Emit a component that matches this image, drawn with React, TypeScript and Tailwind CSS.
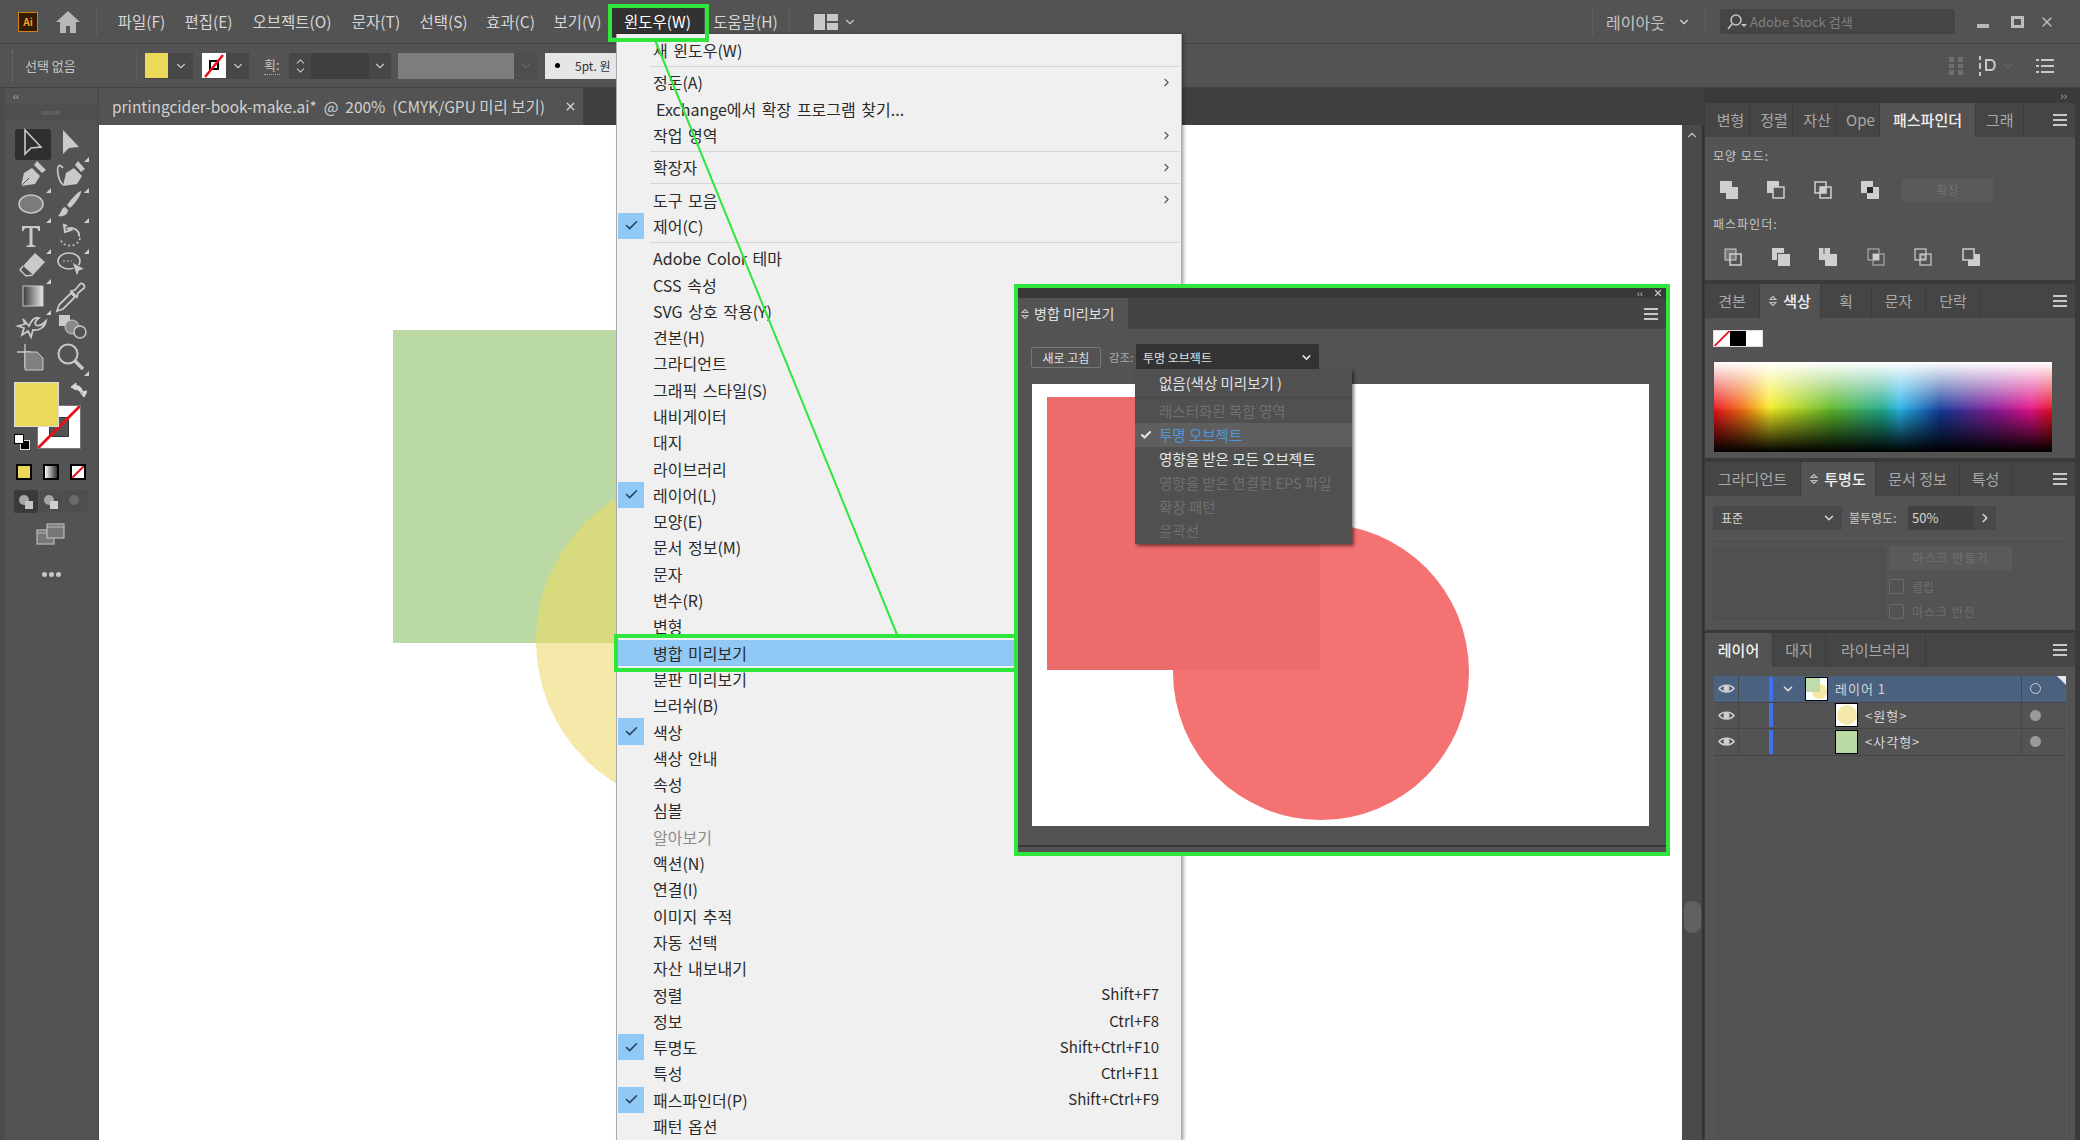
import { Check, ChevronDown, ChevronRight, ChevronUp, X } from "lucide-react";

const menuBar = [
  { label: "파일(F)", w: "w-[67px]" },
  { label: "편집(E)", w: "w-[67px]" },
  { label: "오브젝트(O)", w: "w-[100px]" },
  { label: "문자(T)", w: "w-[68px]" },
  { label: "선택(S)", w: "w-[67px]" },
  { label: "효과(C)", w: "w-[67px]" },
  { label: "보기(V)", w: "w-[67px]" },
  { label: "윈도우(W)", w: "w-[93px]", active: true },
  { label: "도움말(H)", w: "w-[83px]" },
];

type Item = { label: string; arrow?: boolean; check?: boolean; keys?: string; dim?: boolean; hi?: boolean; indent?: boolean; sep?: boolean };

const windowMenu: Item[] = [
  { label: "새 윈도우(W)", sep: true },
  { label: "정돈(A)", arrow: true },
  { label: "Exchange에서 확장 프로그램 찾기...", indent: true },
  { label: "작업 영역", arrow: true, sep: true },
  { label: "확장자", arrow: true, sep: true },
  { label: "도구 모음", arrow: true },
  { label: "제어(C)", check: true, sep: true },
  { label: "Adobe Color 테마" },
  { label: "CSS 속성" },
  { label: "SVG 상호 작용(Y)" },
  { label: "견본(H)" },
  { label: "그라디언트" },
  { label: "그래픽 스타일(S)" },
  { label: "내비게이터" },
  { label: "대지" },
  { label: "라이브러리" },
  { label: "레이어(L)", check: true },
  { label: "모양(E)" },
  { label: "문서 정보(M)" },
  { label: "문자" },
  { label: "변수(R)" },
  { label: "변형" },
  { label: "병합 미리보기", hi: true },
  { label: "분판 미리보기" },
  { label: "브러쉬(B)" },
  { label: "색상", check: true },
  { label: "색상 안내" },
  { label: "속성" },
  { label: "심볼" },
  { label: "알아보기", dim: true },
  { label: "액션(N)" },
  { label: "연결(I)" },
  { label: "이미지 추적" },
  { label: "자동 선택" },
  { label: "자산 내보내기" },
  { label: "정렬", keys: "Shift+F7" },
  { label: "정보", keys: "Ctrl+F8" },
  { label: "투명도", check: true, keys: "Shift+Ctrl+F10" },
  { label: "특성", keys: "Ctrl+F11" },
  { label: "패스파인더(P)", check: true, keys: "Shift+Ctrl+F9" },
  { label: "패턴 옵션" },
];

function Burger() {
  return (
    <div className="ml-auto mr-[8px] flex w-[14px] flex-col gap-[3px]">
      <span className="h-[2px] bg-[#c8c8c8]" />
      <span className="h-[2px] bg-[#c8c8c8]" />
      <span className="h-[2px] bg-[#c8c8c8]" />
    </div>
  );
}

function UpDown() {
  return (
    <svg width="8" height="12" viewBox="0 0 8 12" className="mr-[6px] shrink-0" fill="none" stroke="#bdbdbd" strokeWidth="1.2">
      <path d="M1 4.5 4 1.5l3 3zM1 7.5l3 3 3-3z" />
    </svg>
  );
}

function Tab({ label, w, active, updown, clip }: { label: string; w: string; active?: boolean; updown?: boolean; clip?: boolean }) {
  return (
    <div
      className={`flex h-full items-center justify-center overflow-hidden whitespace-nowrap border-r border-[#3d3d3d] text-[15px] ${w} ${
        active ? "bg-[#535353] font-medium text-[#f0f0f0]" : "text-[#a8a8a8]"
      } ${clip ? "justify-start pl-[10px]" : ""}`}
    >
      {updown && <UpDown />}
      {label}
    </div>
  );
}

function TabBar({ children }: { children: React.ReactNode }) {
  return <div className="flex h-[34px] items-center bg-[#454545]">{children}<Burger /></div>;
}

function Box({ n, fill = "#cfcfcf" }: { n: number; fill?: string }) {
  // pathfinder glyphs, all two overlapping squares with a different part filled
  const c = "#cfcfcf";
  const s = "#535353";
  const shapes = [
    <><rect x="0" y="0" width="12" height="12" fill={c} /><rect x="6" y="6" width="12" height="12" fill={c} /></>,
    <><rect x="0" y="0" width="12" height="12" fill={c} /><rect x="6" y="6" width="11" height="11" fill={s} stroke={c} strokeWidth="1.5" /></>,
    <><rect x="1" y="1" width="11" height="11" fill="none" stroke={c} strokeWidth="1.5" /><rect x="6" y="6" width="11" height="11" fill="none" stroke={c} strokeWidth="1.5" /><rect x="6" y="6" width="6" height="6" fill={c} /></>,
    <><rect x="0" y="0" width="12" height="12" fill={c} /><rect x="6" y="6" width="12" height="12" fill={c} /><rect x="6" y="6" width="6" height="6" fill="#2a2a2a" /></>,
    <><rect x="1" y="1" width="11" height="11" fill={fill} stroke={c} strokeWidth="1" /><rect x="6" y="6" width="11" height="11" fill="none" stroke={c} strokeWidth="1.5" /></>,
    <><rect x="0" y="0" width="12" height="12" fill={c} /><rect x="5" y="5" width="13" height="13" fill={s} /><rect x="6" y="6" width="12" height="12" fill={c} /></>,
    <><rect x="0" y="0" width="11" height="12" fill={c} /><rect x="6" y="6" width="12" height="12" fill={c} /><path d="M5 0v6" stroke={s} /></>,
    <><rect x="1" y="1" width="11" height="11" fill="none" stroke="#aaa" strokeWidth="1.2" /><rect x="6" y="6" width="11" height="11" fill="none" stroke="#aaa" strokeWidth="1.2" /><rect x="6" y="6" width="6" height="6" fill={c} /></>,
    <><rect x="1" y="1" width="11" height="11" fill="none" stroke={c} strokeWidth="1.2" /><rect x="6" y="6" width="11" height="11" fill="none" stroke={c} strokeWidth="1.2" /><rect x="7" y="7" width="4" height="4" fill="none" stroke={c} /></>,
    <><rect x="6" y="6" width="12" height="12" fill={c} /><rect x="1" y="1" width="11" height="11" fill="#535353" stroke={c} strokeWidth="1.5" /></>,
  ];
  return <svg width="18" height="18" viewBox="0 0 18 18" className="shrink-0">{shapes[n]}</svg>;
}

function Triangle() {
  return <path d="M36 36h-5l5-5z" fill="#cfcfcf" />;
}

// tool glyphs, drawn on a 36 box
function ToolIcon({ n }: { n: number }) {
  const c = "#c9c9c9";
  const art = [
    <path key="a" d="M10 4v24l6-6 10-1z" fill="none" stroke={c} strokeWidth="1.6" />,
    <><path d="M10 4v24l6-6 10-1z" fill={c} /><Triangle /></>,
    <><path d="M6 29l3-13 8-5 8 8-5 8zM19 8l3-4 9 9-4 3z" fill={c} /><path d="M6 29l8-8" stroke="#535353" /><Triangle /></>,
    <><path d="M10 29l3-13 8-5 8 8-5 8zM22 8l3-4 7 8-4 3z" fill={c} /><path d="M10 11c-5-6-6 0-5 6s3 9 5 11" fill="none" stroke={c} strokeWidth="1.6" /><Triangle /></>,
    <><ellipse cx="16" cy="17" rx="12" ry="9" fill="#7b7b7b" stroke={c} strokeWidth="1.5" /><Triangle /></>,
    <><path d="M28 4c1 2-5 12-11 17l-3-3C19 11 26 4 28 4zM12 20l3 3c0 5-5 7-10 6 3-2 3-8 7-9z" fill={c} /><Triangle /></>,
    <><path d="M7 8h18v5h-1.500c-.5-2-1.500-3-3-3h-3v16c0 1 1 1.500 3 1.500V29h-9v-1.500c2 0 3-.5 3-1.500V10h-3c-1.500 0-2.500 1-3 3H7z" fill={c} /><Triangle /></>,
    <><path d="M14 8l-3-1 1 7 6-2-3-1.500c5-2 12 2 11 8" fill="none" stroke={c} strokeWidth="2" /><path d="M27 20c-1 6-8 9-14 7-3-1-5-3-6-7" fill="none" stroke={c} strokeWidth="1.600" strokeDasharray="2 2.500" /><Triangle /></>,
    <><path d="M20 5l10 9-12 13-10-9z" fill={c} /><path d="M8 18l-3 4 6 6 7-1" fill="#535353" stroke={c} strokeWidth="1.500" /><Triangle /></>,
    <><ellipse cx="16" cy="13" rx="11" ry="8" fill="none" stroke={c} strokeWidth="1.600" /><path d="M10 13h9" stroke={c} strokeDasharray="2 2" /><path d="M19 14l13 7-6 2-2 6z" fill={c} stroke="#535353" /></>,
    <><defs><linearGradient id="tg" x1="0" x2="1"><stop offset="0" stopColor="#3a3a3a" /><stop offset="1" stopColor="#e8e8e8" /></linearGradient></defs><rect x="8" y="7" width="20" height="20" fill="url(#tg)" stroke={c} /><Triangle /></>,
    <path d="M4 32l2-6L18 14l4 4L10 30zM18 12l4-1 5-6c2-2 6 2 4 4l-6 5-1 4z" fill="#535353" stroke={c} strokeWidth="1.800" />,
    <path d="M8 10l6 7c3-7 7-9 10-8-3 2-5 5-3 7 3 2 8-2 10-4-1 6-7 10-13 9l-2 7-3-6-6 4 2-7-6-2 7-2z" fill="none" stroke={c} strokeWidth="1.800" />,
    <><rect x="6" y="6" width="11" height="11" fill={c} /><circle cx="19" cy="18" r="7" fill="#8a8a8a" stroke={c} /><circle cx="27" cy="23" r="6" fill="#535353" stroke={c} strokeWidth="1.500" /></>,
    <><path d="M10 4v24M2 12h14" stroke={c} strokeWidth="1.300" /><path d="M10 12h12l6 6v12H10z" fill="#808080" stroke={c} strokeWidth="1" /></>,
    <><circle cx="15" cy="14" r="9.500" fill="none" stroke={c} strokeWidth="2" /><path d="M22 21l8 8" stroke={c} strokeWidth="3.500" /><Triangle /></>,
  ];
  return <svg width="36" height="36" viewBox="0 0 36 36" className="shrink-0">{art[n]}</svg>;
}

function Toolbar() {
  return (
    <div className="flex h-full w-[99px] shrink-0 flex-col bg-[#535353] border-l-[5px] border-[#4c4c4c] border-r-[2px]">
      <div className="flex h-[15px] items-center pl-[8px] text-[10px] leading-none text-[#bdbdbd]">‹‹</div>
      <div className="flex h-[18px] items-center justify-center bg-[#4f4f4f] text-[8px] tracking-[0] text-[#777]">ıııııııı</div>
      <div className="mt-[8px] grid grid-cols-2 gap-x-[4px] px-[10px]">
        {Array.from({ length: 16 }, (_, i) => (
          <div key={i} className={`flex h-[30.500px] w-[36px] items-center justify-center rounded-[3px] ${i === 0 ? "bg-[#2f2f2f]" : ""}`}>
            <ToolIcon n={i} />
          </div>
        ))}
      </div>
      <div className="relative mx-[9px] mt-[9px] h-[68px]">
        <div className="absolute left-[23px] top-[23px] h-[44px] w-[44px] overflow-hidden border border-[#777] bg-white">
          <div className="absolute left-[11px] top-[11px] h-[20px] w-[20px] bg-[#535353] border border-[#333]" />
          <svg className="absolute inset-0" viewBox="0 0 44 44"><path d="M0 44 44 0" stroke="#e8101c" strokeWidth="3" /></svg>
        </div>
        <div className="absolute left-0 top-0 h-[45px] w-[45px] border border-[#ddd] bg-[#ecd959]" />
        <svg className="absolute left-[56px] top-0" width="17" height="16" viewBox="0 0 17 16"><path d="M3 5c6-3 9 0 10 7M1 5l5-4v7zM10 10l4 5 3-6z" fill="#d8d8d8" stroke="#d8d8d8" /></svg>
      </div>
      <div className="relative -mt-[16px] ml-[9px] h-[16px] w-[16px]">
        <div className="absolute bottom-0 right-0 h-[10px] w-[10px] border border-[#ddd] bg-black" />
        <div className="absolute left-0 top-0 h-[10px] w-[10px] border border-black bg-white" />
      </div>
      <div className="mt-[10px] flex h-[24px] items-center justify-between px-[11px]">
        <div className="h-[16px] w-[16px] border-2 border-black bg-[#ecd959]" />
        <div className="h-[16px] w-[16px] border-2 border-black bg-gradient-to-r from-white to-[#333]" />
        <div className="relative h-[16px] w-[16px] overflow-hidden border-2 border-black bg-white">
          <svg className="absolute inset-0" viewBox="0 0 12 12"><path d="M0 12 12 0" stroke="#e8101c" strokeWidth="2" /></svg>
        </div>
      </div>
      <div className="mx-[9px] mt-[6px] flex h-[23px] items-stretch gap-[1px] text-[#bdbdbd]">
        {[0, 1, 2].map((i) => (
          <div key={i} className={`flex flex-1 items-center justify-center rounded-[2px] ${i === 0 ? "bg-[#3a3a3a]" : "bg-[#4e4e4e]"}`}>
            <svg width="16" height="16" viewBox="0 0 16 16">
              <circle cx="6" cy="6" r="5" fill={i === 2 ? "#6a6a6a" : "#a6a6a6"} />
              {i < 2 && <rect x="7" y="7" width="8" height="8" fill={i === 0 ? "#c4c4c4" : "#d0d0d0"} />}
            </svg>
          </div>
        ))}
      </div>
      <div className="mt-[10px] flex justify-center">
        <svg width="30" height="22" viewBox="0 0 30 22" fill="#777" stroke="#bbb" strokeWidth="1.200">
          <rect x="1" y="7" width="17" height="14" /><rect x="11" y="1" width="17" height="14" /><path d="M11 4h17M1 10h10" />
        </svg>
      </div>
      <div className="mt-[27px] flex justify-center gap-[2px]">
        <span className="h-[5px] w-[5px] rounded-full bg-[#c8c8c8]" />
        <span className="h-[5px] w-[5px] rounded-full bg-[#c8c8c8]" />
        <span className="h-[5px] w-[5px] rounded-full bg-[#c8c8c8]" />
      </div>
    </div>
  );
}

function TitleBar() {
  return (
    <div className="flex h-[43px] items-center bg-[#535353] pl-[18px] text-[15.500px] text-[#d6d6d6]">
      <div className="flex h-[20px] w-[20px] items-center justify-center border border-[#d87d12] bg-[#321c02] text-[10px] font-bold leading-none text-[#f59b24]">Ai</div>
      <svg width="26" height="24" viewBox="0 0 26 24" className="ml-[17px]" fill="#b8b8b8"><path d="M13 1 1 12h4v11h6v-7h4v7h6V12h4z" /></svg>
      <div className="ml-[15px] mr-[11px] h-[26px] w-px bg-[#5f5f5f]" />
      {menuBar.map((m) => (
        <div key={m.label} className={`flex h-[30px] items-center justify-center whitespace-nowrap ${m.w} ${m.active ? "bg-[#323232] text-white" : ""}`}>
          {m.label}
        </div>
      ))}
      <div className="mx-[2px] h-[26px] w-px bg-[#5f5f5f]" />
      <svg width="24" height="18" viewBox="0 0 24 18" className="ml-[22px]" fill="#c8c8c8"><path d="M0 1h11v16H0zM13 1h11v7H13zM13 10h11v7H13z" /></svg>
      <ChevronDown className="ml-[5px] h-[14px] w-[14px] text-[#c8c8c8]" />
      <div className="ml-auto h-[26px] w-px bg-[#5f5f5f]" />
      <span className="ml-[13px] text-[16px] text-[#c4c4c4]">레이아웃</span>
      <ChevronDown className="ml-[12px] h-[14px] w-[14px]" />
      <div className="mx-[14px] h-[26px] w-px bg-[#5f5f5f]" />
      <div className="flex h-[25px] w-[235px] items-center rounded-[3px] bg-[#454545] pl-[6px] text-[13px] text-[#808080]">
        <svg width="22" height="18" viewBox="0 0 22 18" fill="none" stroke="#c8c8c8" strokeWidth="1.500"><circle cx="10" cy="7" r="5" /><path d="M6 11l-4 5" /><path d="M15 11h6l-3 3z" fill="#c8c8c8" stroke="none" /></svg>
        <span className="ml-[2px]">Adobe Stock 검색</span>
      </div>
      <div className="ml-[22px] flex w-[103px] items-center text-[#bdbdbd]">
        <div className="mt-[8px] h-[4px] w-[12px] bg-[#b8b8b8]" />
        <div className="ml-[22px] h-[12px] w-[13px] border-[3px] border-[#bdbdbd]" />
        <X className="ml-[15px] h-[16px] w-[16px]" />
      </div>
    </div>
  );
}

function ControlBar() {
  return (
    <div className="flex h-[45px] items-center border-y border-[#424242] bg-[#535353] text-[#c4c4c4]">
      <div className="ml-[12px] h-[30px] w-[2px] border-l border-dotted border-[#777]" />
      <span className="ml-[11px] w-[56px] text-[13px]">선택 없음</span>
      <div className="ml-[55px] h-[30px] w-px bg-[#5e5e5e]" />
      <div className="ml-[8px] flex h-[26px] w-[48px] items-center bg-[#474747]">
        <div className="h-[25px] w-[23px] bg-[#ecd959]" />
        <ChevronDown className="mx-auto h-[14px] w-[14px]" />
      </div>
      <div className="ml-[9px] flex h-[26px] w-[47px] items-center bg-[#474747]">
        <div className="relative h-[25px] w-[24px] overflow-hidden bg-white">
          <div className="absolute left-[7px] top-[7px] h-[10px] w-[10px] border-2 border-black" />
          <svg className="absolute inset-0" viewBox="0 0 24 25"><path d="M3 24 21 2" stroke="#e8101c" strokeWidth="2.500" /></svg>
        </div>
        <ChevronDown className="mx-auto h-[14px] w-[14px]" />
      </div>
      <span className="ml-[15px] w-[16px] border-b border-dotted border-[#aaa] text-[13px] leading-[18px]">획:</span>
      <div className="ml-[9px] flex h-[26px] w-[102px] items-center bg-[#474747]">
        <div className="flex w-[22px] flex-col items-center">
          <ChevronUp className="-mb-[2px] h-[13px] w-[13px]" />
          <ChevronDown className="-mt-[2px] h-[13px] w-[13px]" />
        </div>
        <div className="h-full w-[58px] bg-[#3f3f3f]" />
        <ChevronDown className="mx-auto h-[14px] w-[14px]" />
      </div>
      <div className="ml-[7px] h-[26px] w-[116px] bg-[#7d7d7d]" />
      <div className="flex h-[26px] w-[23px] items-center justify-center bg-[#4e4e4e]"><ChevronDown className="h-[14px] w-[14px] text-[#666]" /></div>
      <div className="ml-[8px] flex h-[26px] w-[72px] items-center overflow-hidden whitespace-nowrap bg-[#e6e6e6] pl-[10px] text-[12px] text-[#333]">
        <span className="h-[5px] w-[5px] rounded-full bg-black" />
        <span className="ml-[15px]">5pt. 원</span>
      </div>
      <div className="ml-auto flex items-center pr-[26px] text-[#9c9c9c]">
        <svg width="16" height="20" viewBox="0 0 16 20" fill="#6f6f6f"><path d="M1 1h5v5H1zM10 1h5v5h-5zM1 8h5v4H1zM10 8h5v4h-5zM1 14h5v5H1zM10 14h5v5h-5z" /></svg>
        <svg width="22" height="22" viewBox="0 0 22 22" className="ml-[14px]" fill="none" stroke="#c8c8c8" strokeWidth="2"><path d="M2 1v4M2 8v6M2 17v4M8 5h5c5 0 5 10 0 10H8z" /></svg>
        <ChevronDown className="ml-[2px] h-[12px] w-[12px] text-[#777]" />
        <svg width="18" height="18" viewBox="0 0 18 18" className="ml-[22px]" stroke="#c8c8c8" strokeWidth="2"><path d="M0 3h3M5 3h13M0 9h3M5 9h13M0 15h3M5 15h13" /></svg>
      </div>
    </div>
  );
}

function LayerRow({ name, thumb, top, selected }: { name: string; thumb: React.ReactNode; top?: boolean; selected?: boolean }) {
  return (
    <div className={`flex h-[26.500px] items-center border-b border-[#454545] ${selected ? "bg-[#4a627f]" : ""}`}>
      <div className="flex h-full w-[25px] items-center justify-center border-r border-[#484848]">
        <svg width="17" height="11" viewBox="0 0 17 11" fill="none" stroke="#d0d0d0" strokeWidth="1.500"><path d="M1 5.500C4 1 13 1 16 5.500 13 10 4 10 1 5.500z" /><circle cx="8.500" cy="5.500" r="2.200" fill="#d0d0d0" /></svg>
      </div>
      <div className="ml-[30px] h-[24px] w-[4px] bg-[#4271f0]" />
      {top ? <ChevronDown className="ml-[8px] mr-[2px] h-[14px] w-[14px] text-[#dcdcdc]" strokeWidth={3} /> : <div className="w-[54px]" />}
      <div className="ml-[8px]">{thumb}</div>
      <span className="ml-[7px] whitespace-nowrap text-[13px] tracking-[1px] text-[#d6d6d6]">{name}</span>
      <div className="ml-auto flex h-full w-[45px] items-center border-l border-[#484848] pl-[8px]">
        <span className={`h-[11px] w-[11px] rounded-full ${top ? "border border-[#d0d0d0]" : "bg-[#999]"}`} />
      </div>
    </div>
  );
}

function Dock() {
  return (
    <div className="flex h-full w-[376px] shrink-0 flex-col bg-[#3a3a3a] pl-px pr-[5px]">
      <div className="flex h-[15px] items-center justify-end pr-[8px] text-[11px] leading-none text-[#bbb]">››</div>

      <div className="h-[177px] bg-[#535353]">
        <TabBar>
          <Tab label="변형" w="w-[45px] pl-[7px]" />
          <Tab label="정렬" w="w-[43px] pl-[6px]" />
          <Tab label="자산" w="w-[43px] pl-[6px]" />
          <Tab label="Ope" w="w-[44px]" clip />
          <Tab label="패스파인더" w="w-[96px]" active />
          <Tab label="그래" w="w-[48px]" clip />
        </TabBar>
        <div className="pl-[8px] pt-[11px] text-[12px] leading-[16px] tracking-[1px] text-[#c8c8c8]">모양 모드:</div>
        <div className="mt-[14px] flex h-[24px] items-center gap-[29px] pl-[15px]">
          <Box n={0} /><Box n={1} /><Box n={2} /><Box n={3} />
          <div className="flex h-[23px] w-[91px] -translate-x-[6px] items-center justify-center bg-[#5a5a5a] text-[12px] text-[#717171]">확장</div>
        </div>
        <div className="mt-[14px] pl-[8px] text-[12px] leading-[16px] tracking-[1px] text-[#c8c8c8]">패스파인더:</div>
        <div className="mt-[16px] flex items-center gap-[29.500px] pl-[19px]">
          <Box n={4} fill="#777" /><Box n={5} /><Box n={6} /><Box n={7} /><Box n={8} /><Box n={9} />
        </div>
      </div>

      <div className="mt-[4px] h-[174px] bg-[#535353]">
        <TabBar>
          <Tab label="견본" w="w-[55px]" />
          <Tab label="색상" w="w-[61px]" active updown />
          <Tab label="획" w="w-[51px]" />
          <Tab label="문자" w="w-[54px]" />
          <Tab label="단락" w="w-[55px]" />
        </TabBar>
        <div className="ml-[8px] mt-[12px] flex h-[17px] w-[50px] border border-[#ddd]">
          <div className="relative flex-1 overflow-hidden bg-white">
            <svg className="absolute inset-0 h-full w-full" viewBox="0 0 16 16"><path d="M0 16 16 0" stroke="#e8101c" strokeWidth="2" /></svg>
          </div>
          <div className="flex-1 bg-black" />
          <div className="flex-1 bg-white" />
        </div>
        <svg width="338" height="90" className="ml-[9px] mt-[15px] block" viewBox="0 0 338 90">
          <defs>
            <linearGradient id="hue" x1="0" x2="1">
              <stop offset="0" stopColor="#e8111c" />
              <stop offset="0.08" stopColor="#f26a12" />
              <stop offset="0.165" stopColor="#f6ec22" />
              <stop offset="0.35" stopColor="#5cb82a" />
              <stop offset="0.5" stopColor="#1eaa90" />
              <stop offset="0.55" stopColor="#25b6e8" />
              <stop offset="0.67" stopColor="#123c9c" />
              <stop offset="0.83" stopColor="#8c1c98" />
              <stop offset="0.94" stopColor="#e6108a" />
              <stop offset="1" stopColor="#e8101c" />
            </linearGradient>
            <linearGradient id="wht" x1="0" x2="0" y1="0" y2="1">
              <stop offset="0" stopColor="#fff" />
              <stop offset="0.55" stopColor="#fff" stopOpacity="0" />
            </linearGradient>
            <linearGradient id="blk" x1="0" x2="0" y1="0" y2="1">
              <stop offset="0.5" stopColor="#000" stopOpacity="0" />
              <stop offset="1" stopColor="#000" />
            </linearGradient>
          </defs>
          <rect width="338" height="90" fill="url(#hue)" />
          <rect width="338" height="90" fill="url(#wht)" />
          <rect width="338" height="90" fill="url(#blk)" />
        </svg>
      </div>

      <div className="mt-[4px] h-[168px] bg-[#535353]">
        <TabBar>
          <Tab label="그라디언트" w="w-[96px]" />
          <Tab label="투명도" w="w-[75px]" active updown />
          <Tab label="문서 정보" w="w-[84px]" />
          <Tab label="특성" w="w-[52px]" />
        </TabBar>
        <div className="ml-[8px] mt-[10px] flex h-[24px] items-center">
          <div className="flex h-full w-[129px] items-center justify-between rounded-[2px] bg-[#494949] pl-[8px] pr-[6px] text-[12px] text-[#d8d8d8]">
            표준<ChevronDown className="h-[14px] w-[14px]" strokeWidth={2.500} />
          </div>
          <span className="ml-[7px] w-[59px] text-[12px] text-[#c8c8c8]">불투명도:</span>
          <div className="flex h-full w-[66px] items-center bg-[#424242] pl-[4px] text-[13px] text-[#d8d8d8]">50%</div>
          <div className="flex h-full w-[22px] items-center justify-center bg-[#494949]"><ChevronRight className="h-[14px] w-[14px] text-[#ddd]" strokeWidth={2.500} /></div>
        </div>
        <div className="mx-[8px] mt-[8px] h-px bg-[#5c5c5c]" />
        <div className="ml-[8px] mt-[9px] flex">
          <div className="h-[71px] w-[172px] rounded-[2px] border border-[#4b4b4b] bg-[#505050]" />
          <div className="ml-[4px]">
            <div className="-mt-[2px] flex h-[24px] w-[123px] items-center justify-center bg-[#5a5a5a] text-[12px] tracking-[1px] text-[#717171]">마스크 만들기</div>
            <div className="mt-[9px] flex h-[15px] items-center text-[12px] text-[#6f6f6f]"><span className="mr-[8px] h-[15px] w-[15px] rounded-[2px] border border-[#6a6a6a]" />클립</div>
            <div className="mt-[10px] flex h-[15px] items-center text-[12px] tracking-[1px] text-[#6f6f6f]"><span className="mr-[8px] h-[15px] w-[15px] rounded-[2px] border border-[#6a6a6a]" />마스크 반전</div>
          </div>
        </div>
      </div>

      <div className="mt-[3px] flex flex-1 flex-col bg-[#535353]">
        <TabBar>
          <Tab label="레이어" w="w-[68px]" active />
          <Tab label="대지" w="w-[53px]" />
          <Tab label="라이브러리" w="w-[100px]" />
        </TabBar>
        <div className="mx-[8px] mt-[9px] flex-1 border-x border-[#5a5a5a]">
          <div className="relative">
            <LayerRow
              selected
              top
              name="레이어 1"
              thumb={
                <div className="relative h-[24px] w-[23px] overflow-hidden border border-black bg-white">
                  <div className="absolute left-[6px] top-[6px] h-[15px] w-[15px] rounded-full bg-[#f4e9a9]" />
                  <div className="absolute left-0 top-0 h-[14px] w-[14px] bg-[#bbd9a4]/90" />
                </div>
              }
            />
            <div className="absolute right-0 top-0 h-0 w-0 border-l-[9px] border-t-[9px] border-l-transparent border-t-[#e8e8e8]" />
          </div>
          <LayerRow name="<원형>" thumb={<div className="flex h-[24px] w-[23px] items-center justify-center border border-black bg-white"><div className="h-[20px] w-[20px] rounded-full bg-[#f4e9a9]" /></div>} />
          <LayerRow name="<사각형>" thumb={<div className="h-[24px] w-[23px] border border-black bg-[#bbd9a4]" />} />
        </div>
      </div>
    </div>
  );
}

function WindowMenu() {
  return (
    <div className="absolute left-[616px] top-[34px] h-[1106px] w-[566px] border-x border-[#a9a9a9] bg-[#f0f0f0] pt-[3px] text-[16px] text-[#2a2a2a] shadow-[2px_0_3px_rgba(0,0,0,0.3)] [word-spacing:2px]">
      {windowMenu.map((it) => (
        <div key={it.label}>
          <div className={`flex h-[26.300px] items-center whitespace-nowrap ${it.hi ? "bg-[#90c8f6]" : ""} ${it.dim ? "text-[#8d8d8d]" : ""}`}>
            <div className={`ml-[1px] flex h-full w-[26px] items-center justify-center ${it.check ? "bg-[#90c8f6]" : ""}`}>
              {it.check && <Check className="h-[15px] w-[15px] text-[#26425c]" strokeWidth={2.500} />}
            </div>
            <span className={it.indent ? "ml-[12px]" : "ml-[9px]"}>{it.label}</span>
            {it.arrow && <ChevronRight className="ml-auto mr-[8px] h-[13px] w-[13px] text-[#555]" />}
            {it.keys && <span className="ml-auto mr-[22px] text-[15px]">{it.keys}</span>}
          </div>
          {it.sep && <div className="my-[2.500px] ml-[33px] mr-px h-px bg-[#d5d5d5]" />}
        </div>
      ))}
    </div>
  );
}

function FlattenerPanel() {
  const rows = [
    { label: "없음(색상 미리보기 )", cls: "text-[#e0e0e0] h-[26px]", sep: true },
    { label: "래스터화된 복합 영역", cls: "text-[#6f6f6f] h-[24px]" },
    { label: "투명 오브젝트", cls: "text-[#4f96dc] h-[24px] bg-[#5f5f5f]", check: true },
    { label: "영향을 받은 모든 오브젝트", cls: "text-[#e6e6e6] h-[24px]" },
    { label: "영향을 받은 연결된 EPS 파일", cls: "text-[#6f6f6f] h-[24px]" },
    { label: "확장 패턴", cls: "text-[#6f6f6f] h-[24px]" },
    { label: "윤곽선", cls: "text-[#6f6f6f] h-[24px]" },
  ];
  return (
    <div className="absolute left-[1014px] top-[284px] h-[572px] w-[656px] border-[4px] border-[#2ee63c] bg-[#535353]">
      <div className="flex h-[10px] items-center justify-end bg-[#383838] pr-[3px] text-[10px] leading-none text-[#c4c4c4]">
        <span className="mr-[10px]">‹‹</span>
        <X className="h-[10px] w-[10px]" strokeWidth={3} />
      </div>
      <div className="flex h-[31px] items-center bg-[#444444]">
        <div className="flex h-full w-[110px] items-center bg-[#535353] pl-[3px] text-[14px] text-[#e0e0e0]">
          <svg width="8" height="12" viewBox="0 0 8 12" className="mr-[5px]" fill="none" stroke="#bdbdbd" strokeWidth="1.200"><path d="M1 4.500 4 1.500l3 3zM1 7.500l3 3 3-3z" /></svg>
          병합 미리보기
        </div>
        <Burger />
      </div>
      <div className="mt-[18px] flex h-[21px] items-center pl-[13px]">
        <div className="flex h-full w-[70px] items-center justify-center rounded-[2px] border border-[#777] text-[12px] text-[#e0e0e0]">새로 고침</div>
        <span className="ml-[8px] w-[27px] whitespace-nowrap text-[11.500px] text-[#aaa]">감조:</span>
        <div className="flex h-[27px] w-[183px] items-center justify-between rounded-[2px] bg-[#333333] pl-[7px] pr-[6px] text-[12px] text-[#e0e0e0]">
          투명 오브젝트<ChevronDown className="h-[13px] w-[13px]" strokeWidth={3} />
        </div>
      </div>
      <div className="relative mx-[14px] mt-[16px] h-[442px] w-[617px] overflow-hidden bg-white">
        <div className="absolute left-[141px] top-[140px] h-[296px] w-[296px] rounded-full bg-[#f47272]" />
        <div className="absolute left-[15px] top-[13px] h-[273px] w-[273px] bg-[#ec6b6b]" />
      </div>
      <div className="mt-[19px] h-[2px] bg-[#3a3a3a]" />
      <div className="absolute left-[117px] top-[81px] w-[217px] bg-[#505050] py-[1px] text-[14.500px] leading-none shadow-[2px_2px_3px_rgba(0,0,0,0.5)]">
        {rows.map((r) => (
          <div key={r.label}>
            <div className={`relative flex items-center whitespace-nowrap pl-[24px] ${r.cls}`}>
              {r.check && <Check className="absolute left-[5px] h-[12px] w-[12px] text-[#e8e8e8]" strokeWidth={4} />}
              {r.label}
            </div>
            {r.sep && <div className="my-[1px] h-px bg-[#474747]" />}
          </div>
        ))}
      </div>
    </div>
  );
}

export default function App() {
  return (
    <div className="relative h-[1140px] w-[2080px] overflow-hidden bg-[#535353] font-['Noto_Sans_CJK_KR','Liberation_Sans',sans-serif]">
      <TitleBar />
      <ControlBar />
      <div className="flex h-[1052px]">
        <Toolbar />
        <div className="flex min-w-0 flex-1 flex-col bg-[#3f3f3f]">
          <div className="flex h-[37px] shrink-0 items-center">
            <div className="flex h-full w-[484px] items-center justify-between bg-[#535353] pl-[13px] pr-[6px] text-[15.500px] text-[#d0d0d0]">
              <span className="whitespace-nowrap">printingcider-book-make.ai*&nbsp; @&nbsp; 200%&nbsp; (CMYK/GPU 미리 보기)</span>
              <X className="h-[13px] w-[13px]" strokeWidth={2.500} />
            </div>
          </div>
          <div className="flex min-h-0 flex-1">
            <div className="relative flex-1 bg-white">
              {/* artwork, positions come from the canvas */}
              <div className="absolute left-[437px] top-[349px] h-[334px] w-[334px] rounded-full bg-[#f4e9a9]" />
              <div className="absolute left-[294px] top-[205px] h-[313px] w-[313px] bg-[#bbd9a4]" />
              <div className="absolute left-[437px] top-[349px] h-[169px] w-[170px] overflow-hidden">
                <div className="h-[334px] w-[334px] rounded-full bg-[#d8da7e]" />
              </div>
            </div>
            <div className="relative w-[22px] shrink-0 border-r-2 border-[#333] bg-[#4a4a4a]">
              <ChevronUp className="absolute left-[3px] top-[3px] h-[14px] w-[14px] text-[#bbb]" />
              <div className="absolute left-[2px] top-[776px] h-[32px] w-[17px] rounded-[8px] bg-[#616161]" />
            </div>
          </div>
        </div>
        <Dock />
      </div>

      <WindowMenu />
      <FlattenerPanel />

      {/* green call-outs drawn over the screenshot */}
      <div className="absolute left-[608px] top-[4px] h-[38px] w-[101px] border-[4px] border-[#2ee63c]" />
      <div className="absolute left-[614px] top-[634px] h-[38px] w-[402px] border-[4px] border-r-0 border-[#2ee63c]" />
      <svg className="absolute left-0 top-0" width="2080" height="1140" pointerEvents="none">
        <line x1="655" y1="40" x2="898" y2="637" stroke="#2ee63c" strokeWidth="2" />
      </svg>
    </div>
  );
}
